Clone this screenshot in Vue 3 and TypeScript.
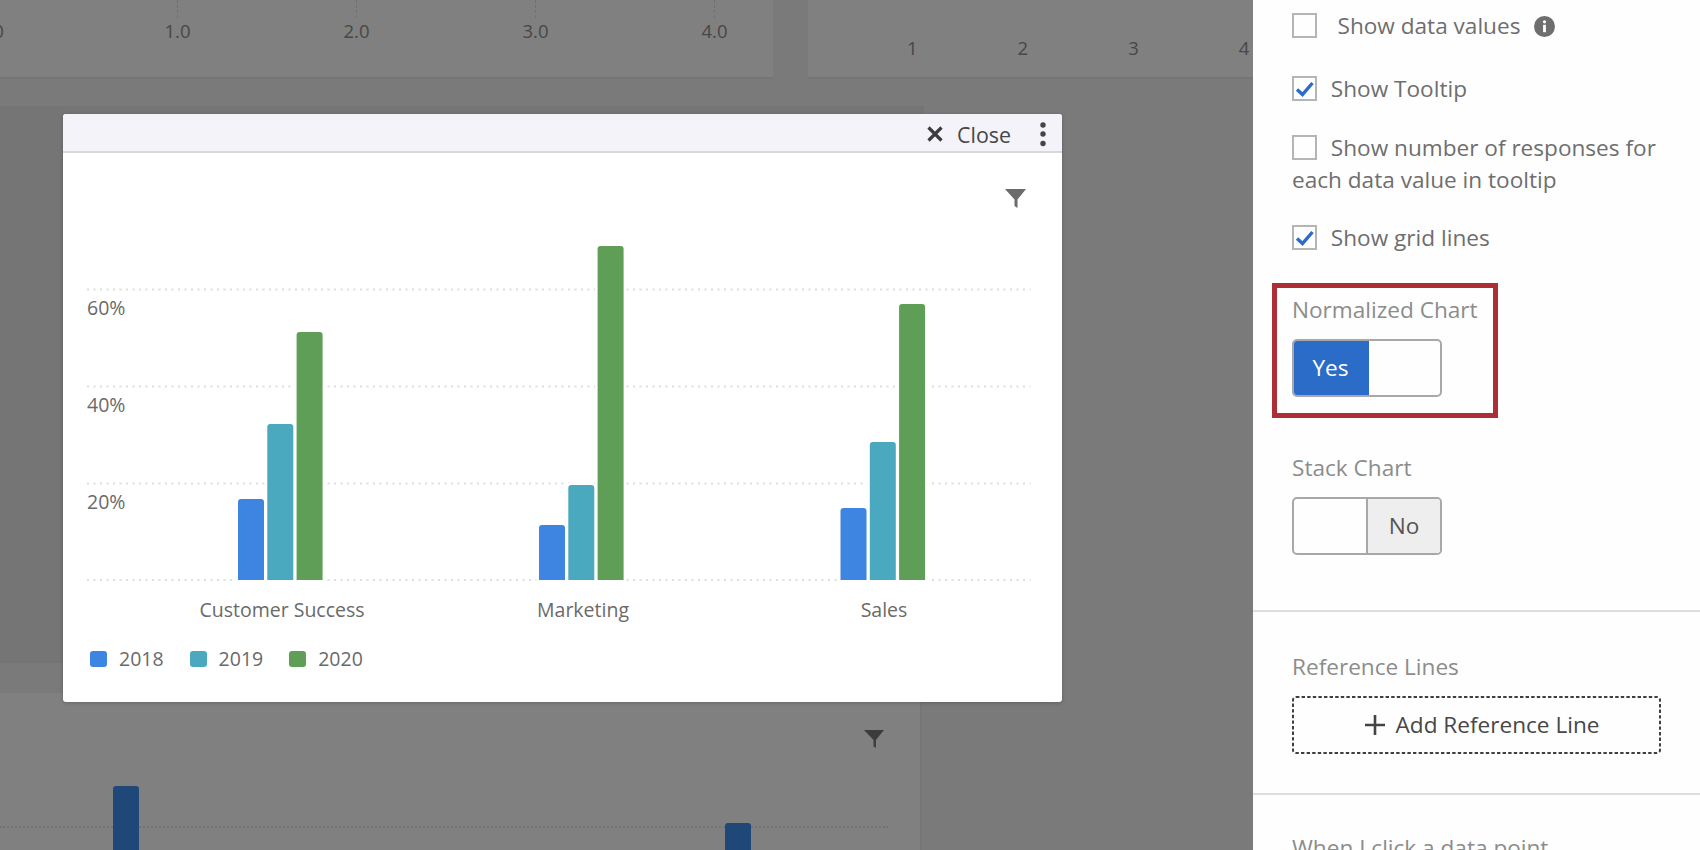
<script setup lang="ts">
import { ref } from 'vue'

interface Group {
  name: string
  x: number
  labelX: number
  values: number[]
}

const base = 370
const barColors = ['#3d85e0', '#4aa9bf', '#5f9e56']
const years = ['2018', '2019', '2020']

const groups = ref<Group[]>([
  { name: 'Customer Success', x: 175, labelX: 219, values: [81, 156, 248] },
  { name: 'Marketing', x: 476, labelX: 520, values: [55, 95, 334] },
  { name: 'Sales', x: 777.5, labelX: 821, values: [72, 138, 276] },
])

const gridLines = [79.5, 176.5, 273.5, 370]
const yLabels = [
  { text: '60%', y: 105 },
  { text: '40%', y: 202 },
  { text: '20%', y: 299 },
]

// rounded on the top corners only
function barPath(x: number, h: number) {
  const w = 26
  const r = 3
  const t = base - h
  return `M${x} ${base}V${t + r}Q${x} ${t} ${x + r} ${t}H${x + w - r}Q${x + w} ${t} ${x + w} ${t + r}V${base}Z`
}
</script>

<template>
  <div class="page">
    <div class="dash">
      <div class="dash__top">
        <div class="card card--a">
          <div v-for="n in ['0', '1.0', '2.0', '3.0', '4.0']" :key="n" class="tick">
            <i class="tick__line" />
            <span>{{ n }}</span>
          </div>
        </div>
        <div class="card card--b">
          <span v-for="n in ['1', '2', '3', '4']" :key="n" class="num">{{ n }}</span>
        </div>
      </div>
      <div class="card card--mid" />
      <div class="card card--low">
        <div class="low__filter">
          <svg width="20" height="20" viewBox="0 0 21 19"><path d="M0 0H21L12.5 10.5V19L10 17V10.5Z" fill="#3c3c3c" /></svg>
        </div>
        <div class="low__plot">
          <i class="low__grid" />
          <i class="low__bar" />
          <i class="low__bar low__bar--2" />
        </div>
      </div>

      <div class="modal">
        <div class="modal__head">
          <svg class="modal__x" width="16" height="16" viewBox="0 0 16 16">
            <path d="M1.5 1.5L14.5 14.5M14.5 1.5L1.5 14.5" stroke="#3d3d3d" stroke-width="3.2" fill="none" />
          </svg>
          <span class="modal__close">Close</span>
          <svg width="8" height="26" viewBox="0 0 8 26" class="modal__more">
            <circle cx="4" cy="4" r="2.7" fill="#444" />
            <circle cx="4" cy="13" r="2.7" fill="#444" />
            <circle cx="4" cy="22.5" r="2.7" fill="#444" />
          </svg>
        </div>
        <div class="modal__filter">
          <svg width="21" height="19" viewBox="0 0 21 19"><path d="M0 0H21L12.5 10.5V19L9.5 17V10.5Z" fill="#6b6b6b" /></svg>
        </div>
        <svg class="chart" width="999" height="420" viewBox="0 0 999 420">
          <line
            v-for="y in gridLines"
            :key="y"
            x1="24"
            x2="967.5"
            :y1="y"
            :y2="y"
            stroke="#dedede"
            stroke-width="2"
            stroke-dasharray="2 4.5"
          />
          <text v-for="l in yLabels" :key="l.text" x="24" :y="l.y" class="chart__text">{{ l.text }}</text>
          <g v-for="g in groups" :key="g.name">
            <path
              v-for="(v, i) in g.values"
              :key="i"
              :d="barPath(g.x + i * 29.3, v)"
              :fill="barColors[i]"
              stroke="#fff"
              stroke-width="5"
              paint-order="stroke"
            />
            <text :x="g.labelX" y="407" text-anchor="middle" class="chart__text">{{ g.name }}</text>
          </g>
        </svg>
        <div class="legend">
          <div v-for="(y, i) in years" :key="y" class="legend__item">
            <i class="legend__swatch" :style="{ background: barColors[i] }" />
            <span>{{ y }}</span>
          </div>
        </div>
      </div>
    </div>

    <aside class="panel">
      <div class="panel__section panel__section--first">
        <div class="opt opt--info">
          <span class="box" />
          <span class="opt__pad">Show data values</span>
          <svg class="info" width="21" height="21" viewBox="0 0 21 21">
            <circle cx="10.5" cy="10.5" r="10.5" fill="#6e6e6e" />
            <circle cx="10.5" cy="5.8" r="1.6" fill="#fff" />
            <rect x="9.1" y="8.8" width="2.8" height="7.4" fill="#fff" />
          </svg>
        </div>
        <div class="opt">
          <span class="box">
            <svg width="21" height="21" viewBox="0 0 21 21"><path d="M3 11.5L8.5 16.5L18.5 5" stroke="#2b6cc9" stroke-width="3.4" fill="none" /></svg>
          </span>
          Show Tooltip
        </div>
        <div class="opt opt--long">
          <span class="box" />
          Show number of responses for each data value in tooltip
        </div>
        <div class="opt opt--last">
          <span class="box">
            <svg width="21" height="21" viewBox="0 0 21 21"><path d="M3 11.5L8.5 16.5L18.5 5" stroke="#2b6cc9" stroke-width="3.4" fill="none" /></svg>
          </span>
          Show grid lines
        </div>

        <div class="mark">
          <div class="label">Normalized Chart</div>
          <div class="toggle">
            <span class="toggle__yes">Yes</span>
          </div>
        </div>

        <div class="label label--stack">Stack Chart</div>
        <div class="toggle toggle--off">
          <span class="toggle__no">No</span>
        </div>
      </div>

      <div class="panel__section panel__section--ref">
        <div class="label">Reference Lines</div>
        <div class="add">
          <svg class="add__frame" width="369" height="58" viewBox="0 0 369 58">
            <rect x="1" y="1" width="367" height="56" rx="3" fill="none" stroke="#3f3f3f" stroke-width="2" stroke-dasharray="3.4 2.2" />
          </svg>
          <svg width="20" height="20" viewBox="0 0 20 20"><path d="M10 0V20M0 10H20" stroke="#444" stroke-width="2.6" /></svg>
          <span>Add Reference Line</span>
        </div>
      </div>

      <div class="panel__section panel__section--click">
        <div class="label">When I click a data point</div>
      </div>
    </aside>
  </div>
</template>

<style scoped>
.page {
  display: flex;
  height: 850px;
  overflow: hidden;
  font-family: "Open Sans", "Liberation Sans", sans-serif;
  background: #7a7a7a;
}

.dash {
  position: relative;
  width: 1253px;
  flex: none;
  overflow: hidden;
}

.dash__top {
  display: flex;
  gap: 35px;
  height: 77px;
  margin-bottom: 29px;
}

.card {
  background: #808080;
  box-shadow: 0 2px 0 #767676;
  color: #474747;
  font-size: 18.5px;
}

.card--a {
  display: flex;
  flex: none;
  width: 773px;
  overflow: hidden;
}

.tick {
  flex: none;
  width: 179px;
  display: flex;
  flex-direction: column;
  align-items: center;
}

.tick:first-child {
  margin-left: -91px;
}

.tick__line {
  height: 18px;
  border-left: 1px dashed #717171;
}

.tick span {
  line-height: 26px;
}

.card--b {
  flex: 1;
  min-width: 0;
  display: flex;
  align-items: flex-start;
  padding: 35px 0 0 49px;
  overflow: hidden;
}

.num {
  flex: none;
  width: 110.6px;
  text-align: center;
  line-height: 26px;
}

.card--mid {
  width: 924px;
  height: 557px;
  margin-bottom: 30px;
  background: #757575;
  box-shadow: none;
}

.card--low {
  width: 920px;
  height: 157px;
  box-shadow: 2px 0 0 #767676;
}

.low__filter {
  display: flex;
  justify-content: flex-end;
  padding: 36px 36px 0 0;
}

.low__plot {
  position: relative;
  display: flex;
  margin-top: 37px;
  padding-left: 113px;
}

.low__grid {
  position: absolute;
  left: 0;
  right: 32px;
  top: 40px;
  border-top: 2px dotted #737373;
}

.low__bar {
  position: relative;
  width: 26px;
  height: 90px;
  background: #1f4777;
  border-radius: 3px 3px 0 0;
}

.low__bar--2 {
  margin-left: 586px;
  margin-top: 37px;
}

.modal {
  position: absolute;
  left: 63px;
  top: 114px;
  width: 999px;
  height: 588px;
  background: #fff;
  border-radius: 3px;
  box-shadow: 0 1px 4px rgba(0, 0, 0, 0.2);
  color: #6a6a6a;
}

.modal__head {
  display: flex;
  align-items: center;
  justify-content: flex-end;
  height: 34px;
  padding: 3px 15px 0 0;
  background: #f3f3f9;
  border-bottom: 2px solid #d8d8d8;
  border-radius: 3px 3px 0 0;
}

.modal__x {
  margin-right: 14px;
}

.modal__close {
  font-size: 21.4px;
  color: #474747;
  margin-right: 28px;
}

.modal__filter {
  display: flex;
  justify-content: flex-end;
  padding: 36px 36px 0 0;
  height: 57px;
  box-sizing: border-box;
}

.chart {
  display: block;
}

.chart__text {
  font-size: 19.5px;
  fill: #6a6a6a;
}

.legend {
  display: flex;
  gap: 26px;
  padding-left: 27px;
  margin-top: 19px;
  font-size: 19.5px;
}

.legend__item {
  display: flex;
  align-items: center;
  gap: 12px;
  line-height: 20px;
}

.legend__swatch {
  width: 17px;
  height: 16px;
  border-radius: 3px;
}

.panel {
  flex: 1;
  background: #fefefe;
  color: #6e6e6e;
  font-size: 22.6px;
  line-height: 32px;
}

.panel__section {
  padding: 38px 39px 39px;
  border-bottom: 2px solid #dedede;
}

.panel__section--first {
  padding-top: 10px;
  padding-bottom: 55px;
  padding-right: 40px;
}

.panel__section--ref {
  padding-top: 40px;
}

.panel__section--click {
  border-bottom: none;
}

.opt {
  margin-bottom: 27px;
}

.opt--info {
  margin-bottom: 31px;
}

.opt--long {
  margin-bottom: 26px;
}

.opt--last {
  margin-bottom: 29px;
}

.opt__pad {
  margin-left: 12.5px;
}

.box {
  display: inline-flex;
  align-items: center;
  justify-content: center;
  width: 25px;
  height: 25px;
  box-sizing: border-box;
  border: 2px solid #b5b5b5;
  margin: 3px 8px 0 0;
  vertical-align: top;
}

.info {
  margin-left: 14px;
  vertical-align: -3px;
}

.mark {
  width: 226px;
  box-sizing: border-box;
  margin-left: -20px;
  padding: 7px 0 16px 15px;
  border: 5px solid #ad2f35;
}

.label {
  color: #8c8c8c;
  line-height: 30px;
}

.label--stack {
  margin-top: 35px;
}

.toggle {
  display: flex;
  justify-content: flex-start;
  width: 150px;
  height: 58px;
  margin-top: 14px;
  box-sizing: border-box;
  border: 2px solid #a8a8a8;
  border-radius: 5px;
  overflow: hidden;
}

.toggle__yes {
  display: flex;
  align-items: center;
  justify-content: center;
  width: 77px;
  margin: -2px 0 -2px -2px;
  background: #2b6cc9;
  color: #fff;
}

.toggle--off {
  justify-content: flex-end;
}

.toggle__no {
  display: flex;
  align-items: center;
  justify-content: center;
  width: 72px;
  background: #eeeeee;
  border-left: 2px solid #a8a8a8;
  color: #555;
}

.add {
  position: relative;
  display: flex;
  align-items: center;
  justify-content: center;
  gap: 11px;
  height: 58px;
  margin-top: 14px;
  padding-left: 11px;
  color: #474747;
}

.add__frame {
  position: absolute;
  left: 0;
  top: 0;
}
</style>

<style>
html,
body {
  margin: 0;
  overflow: hidden;
}
</style>
